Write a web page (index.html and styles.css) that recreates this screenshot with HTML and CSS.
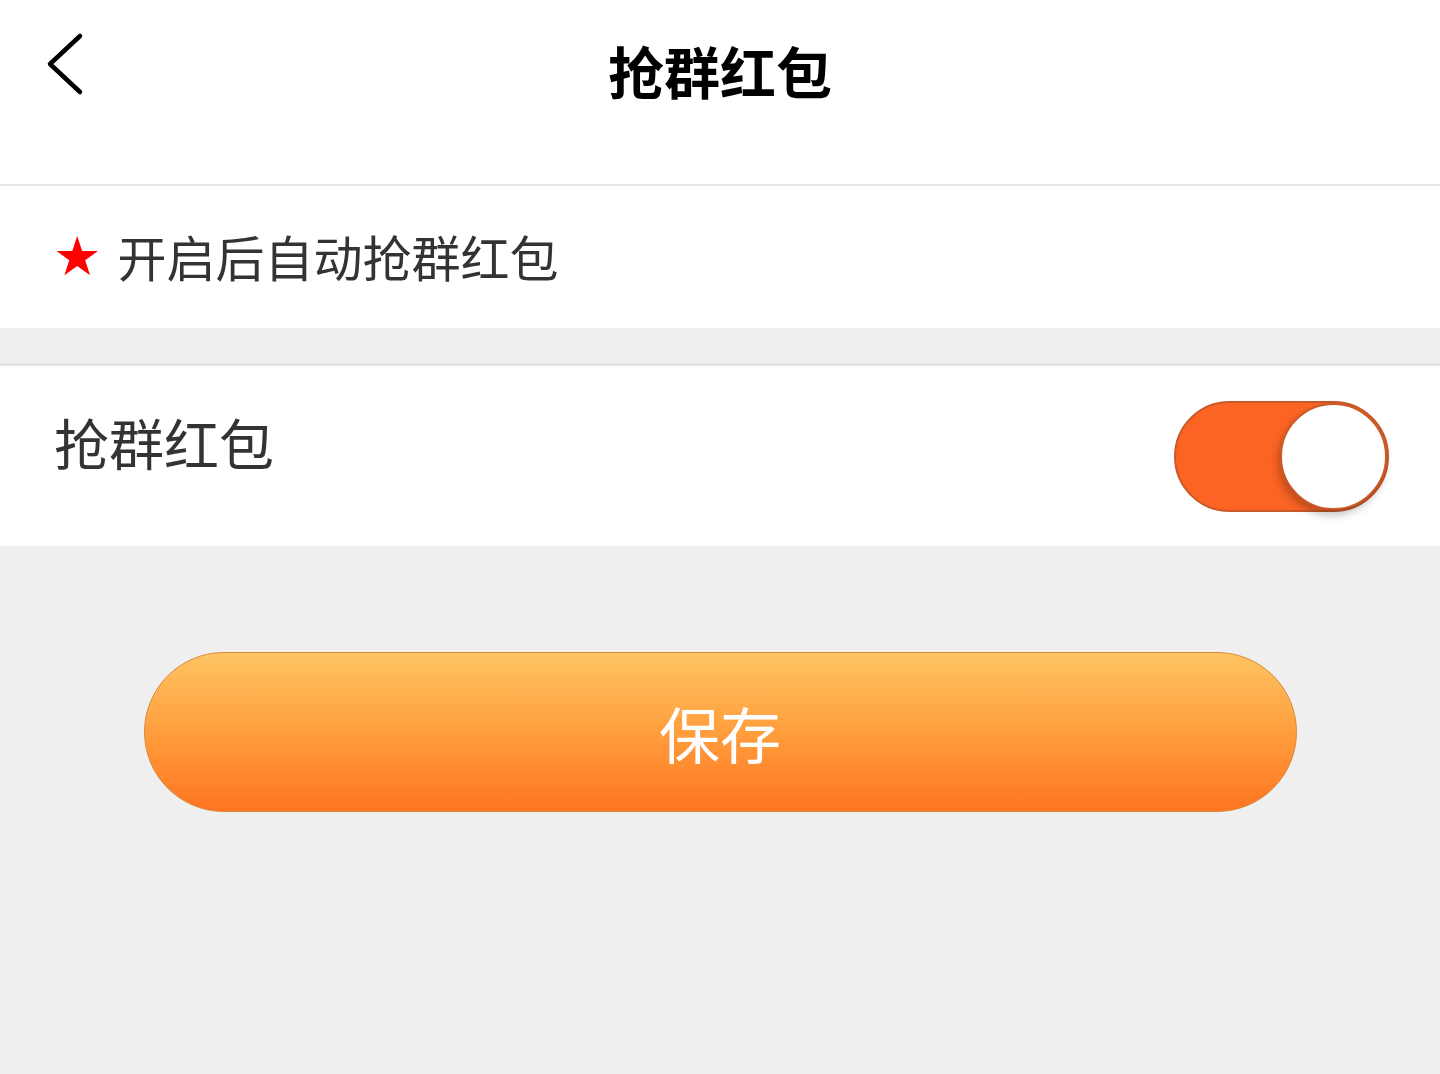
FILE: index.html
```html
<!DOCTYPE html>
<html lang="zh-CN">
<head>
    <meta charset="UTF-8">
    <meta name="viewport" content="width=device-width, initial-scale=1.0">
    <title>抢群红包</title>
    <link rel="stylesheet" href="styles.css">
</head>
<body>

<div class="header">
    <a class="back" href="#">
        <svg width="40" height="70" viewBox="0 0 40 70">
            <path d="M36 7 L6 35 L36 63" fill="none" stroke="#000" stroke-width="4.5" stroke-linecap="round" stroke-linejoin="round"/>
        </svg>
    </a>
    <div class="title">抢群红包</div>
</div>

<div class="tip">
    <span class="star">★</span>
    <span class="tip-text">开启后自动抢群红包</span>
</div>

<div class="gap"></div>

<div class="row">
    <span class="row-label">抢群红包</span>
    <div class="switch on">
        <div class="knob"></div>
    </div>
</div>

<div class="actions">
    <button class="save">保存</button>
</div>

</body>
</html>
```

FILE: styles.css
```css
body {
    margin: 0;
    font-family: "Noto Sans CJK SC", "Noto Sans", sans-serif;
    background-color: #efefef;
    height: 1074px;
}
.header {
    position: relative;
    height: 184px;
    background-color: #fff;
    border-bottom: 2px solid #e6e6e6;
    display: flex;
    justify-content: center;
}
.back {
    position: absolute;
    left: 44px;
    top: 29px;
    display: block;
}
.title {
    margin-top: 34px;
    font-size: 56px;
    font-weight: bold;
    line-height: 72px;
    color: #000;
}
.tip {
    height: 142px;
    background-color: #fff;
    display: flex;
    align-items: center;
    padding-left: 53px;
}
.star {
    color: #f00;
    font-size: 54px;
    font-family: "DejaVu Sans", sans-serif;
    margin-right: 16px;
    margin-top: -2px;
}
.tip-text {
    font-size: 49px;
    color: #333;
    margin-top: -4px;
}
.gap {
    height: 35px;
    border-bottom: 3px solid #e4e4e4;
}
.row {
    height: 180px;
    background-color: #fff;
    display: flex;
    align-items: center;
    justify-content: space-between;
    padding: 0 51px 0 54px;
}
.row-label {
    font-size: 55px;
    color: #333;
    margin-top: -30px;
}
.switch {
    width: 211px;
    height: 107px;
    border-radius: 56px;
    background-color: #fc6424;
    border: 2px solid #c95a2a;
    position: relative;
}
.knob {
    position: absolute;
    right: 0;
    top: 0;
    width: 103px;
    height: 103px;
    border-radius: 50%;
    background-color: #fff;
    border: 2px solid #c95a2a;
    box-shadow: -2px 5px 8px rgba(0, 0, 0, 0.25);
}
.actions {
    display: flex;
    justify-content: center;
    padding-top: 106px;
}
.save {
    width: 1153px;
    height: 160px;
    border-radius: 80px;
    border: 1px solid #d98a3c;
    background: linear-gradient(to bottom, #ffc462, #ff9a3a 55%, #ff7420);
    color: #fff;
    font-family: "Noto Sans CJK SC", sans-serif;
    font-size: 61px;
    cursor: pointer;
}
```
